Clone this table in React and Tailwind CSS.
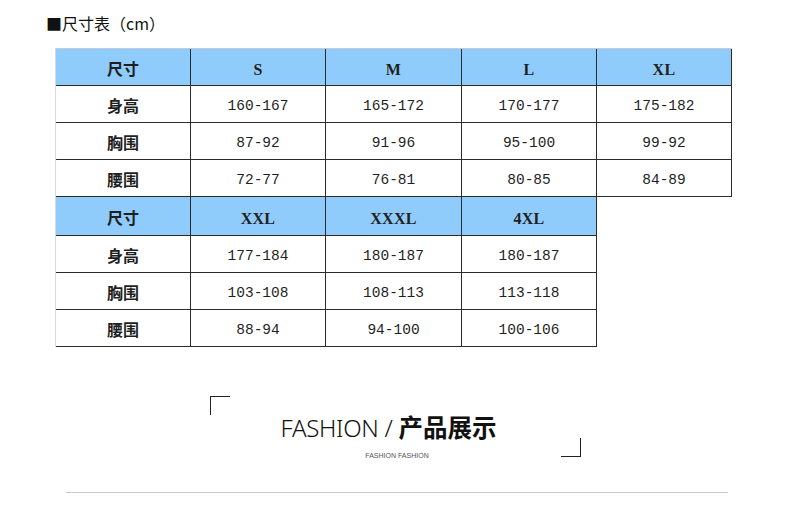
const TOP_SIZES = ["S", "M", "L", "XL"];
const TOP_ROWS = [
  ["身高", "160-167", "165-172", "170-177", "175-182"],
  ["胸围", "87-92", "91-96", "95-100", "99-92"],
  ["腰围", "72-77", "76-81", "80-85", "84-89"],
];

const BOTTOM_SIZES = ["XXL", "XXXL", "4XL"];
const BOTTOM_ROWS = [
  ["身高", "177-184", "180-187", "180-187"],
  ["胸围", "103-108", "108-113", "113-118"],
  ["腰围", "88-94", "94-100", "100-106"],
];

const cjk = { fontFamily: '"Noto Sans CJK SC", "Noto Sans", sans-serif' };
const mono = { fontFamily: '"Liberation Mono", "DejaVu Sans Mono", monospace' };
const serif = { fontFamily: '"Liberation Serif", "DejaVu Serif", serif' };

function Cell({ children, head, label, tall }) {
  let text;
  if (label) {
    text = (
      <span className="pt-[2px] text-[16px] font-bold leading-none" style={cjk}>
        {children}
      </span>
    );
  } else if (head) {
    text = (
      <span className="pt-[5px] text-[16px] font-bold leading-none tracking-[0.3px]" style={serif}>
        {children}
      </span>
    );
  } else {
    text = (
      <span className="pt-[4px] text-[14.5px] leading-none" style={mono}>
        {children}
      </span>
    );
  }
  return (
    <div
      className={`flex items-center justify-center border-r border-b border-[#2b2b2b] text-[#1f1f1f] ${
        tall ? "h-[39px]" : "h-[37px]"
      } ${head ? "bg-[#8fcbfb]" : "bg-white"}`}
    >
      {text}
    </div>
  );
}

export default function App() {
  return (
    <div className="w-[790px] h-[511px] overflow-hidden bg-white">
      <div
        className="pt-[13px] pl-[46px] text-[16px] leading-[20px] text-[#111]"
        style={cjk}
      >
        ■尺寸表（cm）
      </div>

      <div className="mt-[15px] ml-[55px] w-fit">
        {/* first block: S - XL */}
        <div className="grid grid-cols-[135px_135px_136px_135px_135px] border-t border-l border-t-[#c3c9d6] border-l-[#d3d9e6]">
          <Cell head label>尺寸</Cell>
          {TOP_SIZES.map((s) => (
            <Cell key={s} head>{s}</Cell>
          ))}
          {TOP_ROWS.map((row) =>
            row.map((v, i) => (
              <Cell key={row[0] + i} label={i === 0}>{v}</Cell>
            ))
          )}
        </div>

        {/* second block: XXL - 4XL */}
        <div className="grid grid-cols-[135px_135px_136px_135px] w-fit border-l border-l-[#d3d9e6]">
          <Cell head label tall>尺寸</Cell>
          {BOTTOM_SIZES.map((s) => (
            <Cell key={s} head tall>{s}</Cell>
          ))}
          {BOTTOM_ROWS.map((row) =>
            row.map((v, i) => (
              <Cell key={row[0] + i} label={i === 0}>{v}</Cell>
            ))
          )}
        </div>
      </div>

      <div className="relative mt-[49px] ml-[210px] w-[371px] h-[61px]">
        <div className="absolute top-0 left-0 w-[20px] h-[19px] border-t border-l border-[#222]" />
        <div className="absolute bottom-0 right-0 w-[20px] h-[19px] border-b border-r border-[#222]" />
        <div className="pt-[17px] pr-[14px] flex justify-center items-baseline text-[24px] leading-[28px] text-[#111]">
          <span className="font-light tracking-[-0.3px]" style={{ fontFamily: '"Noto Sans", sans-serif' }}>
            FASHION&nbsp;/&nbsp;
          </span>
          <span className="font-bold text-[24.5px]" style={cjk}>产品展示</span>
        </div>
        <div
          className="mt-[9px] pl-[3px] text-center text-[7px] leading-[10px] text-[#555]"
          style={{ fontFamily: '"Liberation Sans", Arial, sans-serif' }}
        >
          FASHION FASHION
        </div>
      </div>

      <div className="mt-[35px] ml-[66px] w-[662px] h-px bg-[#cccccc]" />
    </div>
  );
}
